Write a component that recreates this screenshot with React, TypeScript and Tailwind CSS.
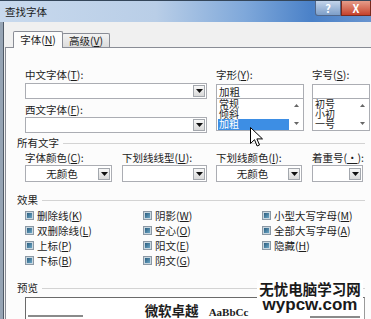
import type { ReactNode } from 'react'

function DownArrow() {
  return (
    <svg width="7" height="4" viewBox="0 0 7 4">
      <path d="M0 0h7L3.5 4z" fill="#111" />
    </svg>
  )
}

function Tri({ up }: { up?: boolean }) {
  return (
    <svg width="5" height="3" viewBox="0 0 5 3">
      <path d={up ? 'M0 3h5L2.5 0z' : 'M0 0h5L2.5 3z'} fill="#666" />
    </svg>
  )
}

function K({ k }: { k: string }) {
  return <span className="underline underline-offset-[1px]">{k}</span>
}

function Label({ children, className = '' }: { children: ReactNode; className?: string }) {
  return <div className={`h-[12px] whitespace-nowrap leading-[12px] ${className}`}>{children}</div>
}

function Combo({ className, text }: { className: string; text?: string }) {
  return (
    <div className={`flex items-center border border-[#abadb3] bg-white ${className}`}>
      <div className="flex-1 text-center leading-[12px]">{text}</div>
      <div className="mr-[1px] flex h-[12px] w-[12px] items-center justify-center border border-[#a3a7ad] bg-gradient-to-b from-[#f8f8f8] to-[#d9d9d9]">
        <DownArrow />
      </div>
    </div>
  )
}

function ListBox({ items, selected, className }: { items: string[]; selected?: number; className: string }) {
  return (
    <div className={`flex border border-[#abadb3] bg-white ${className}`}>
      <div className="flex-1 pl-[1px] text-[10px]">
        {items.map((it, i) => (
          <div
            key={it}
            className={`${i === 2 ? 'h-[11px]' : 'h-[10px]'} pl-[1px] leading-[10px] ${
              i === selected ? 'bg-[#3d8ee4] text-white' : ''
            }`}
          >
            {it}
          </div>
        ))}
      </div>
      <div className="flex w-[14px] flex-col items-center justify-between py-[5px]">
        <Tri up />
        <Tri />
      </div>
    </div>
  )
}

function Heading({ children, className = '' }: { children: ReactNode; className?: string }) {
  return (
    <div className={`-ml-[8px] mr-[6px] flex h-[12px] items-center ${className}`}>
      <span className="leading-[12px]">{children}</span>
      <span className="ml-[4px] h-px flex-1 bg-[#d3d3d3]" />
    </div>
  )
}

function Check({ children }: { children: ReactNode }) {
  return (
    <div className="flex h-[15px] items-center">
      <span className="h-[9px] w-[9px] border border-[#8b98a4] bg-[#c9d7e0] p-px">
        <span className="block h-full w-full bg-gradient-to-br from-[#2b5d7e] to-[#6aa6c6]" />
      </span>
      <span className="ml-[3px] whitespace-nowrap leading-[12px]">{children}</span>
    </div>
  )
}

export default function App() {
  return (
    <div className="relative h-[319px] w-[371px] overflow-hidden bg-[#f0f0f0] font-['Noto_Sans_CJK_SC','Noto_Sans',sans-serif] text-[10.5px] text-[#1d1d1d]">
      {/* 标题栏 */}
      <div className="flex h-[22px] border-t border-[#34465a] bg-[linear-gradient(90deg,#c8d9ed_0%,#b9cee7_42%,#7fa8da_66%,#4a81c8_84%,#6894cf_100%)]">
        <div className="pl-[5px] pt-[4px] leading-[14px] text-[#1a1a1a]">查找字体</div>
        <div className="ml-auto flex">
          <div className="flex h-[15px] w-[26px] items-center justify-center rounded-bl-[3px] border border-t-0 border-[#51678a] bg-gradient-to-b from-[#c3d4ea] to-[#7d9ec8] text-[11px] font-bold leading-[12px] text-white">
            ?
          </div>
          <div className="flex h-[15px] w-[30px] items-center justify-center border border-t-0 border-[#7a2a1e] bg-gradient-to-b from-[#e59c8a] to-[#c5402a] text-[11px] font-bold leading-[12px] text-white">
            X
          </div>
        </div>
      </div>

      <div className="flex h-[297px]">
        <div className="w-[4px] border-r border-[#4f5966] bg-[#96a4b4]" />
        <div className="flex-1 pt-[9px]">
          {/* 选项卡 */}
          <div className="relative z-10 flex h-[16px] items-end pl-[9px]">
            <div className="-mb-px flex h-[17px] w-[50px] items-center justify-center rounded-t-[2px] border border-b-0 border-[#898c95] bg-[#fcfcfc] leading-[12px]">
              字体(<K k="N" />)
            </div>
            <div className="-ml-px flex h-[14px] w-[48px] items-center justify-center rounded-t-[2px] border border-b-0 border-[#898c95] bg-gradient-to-b from-[#f3f3f3] to-[#dcdcdc] leading-[12px]">
              高级(<K k="V" />)
            </div>
          </div>

          <div className="ml-[1px] h-[300px] border-l border-t border-[#898c95] bg-[#fcfcfc] pl-[19px]">
            <div className="flex pt-[21px]">
              <div className="w-[182px]">
                <Label>
                  中文字体(<K k="T" />):
                </Label>
                <Combo className="mt-[2px] h-[16px] w-[182px]" />
                <Label className="mt-[5px]">
                  西文字体(<K k="F" />):
                </Label>
                <Combo className="mt-[1px] h-[16px] w-[182px]" />
              </div>
              <div className="ml-[9px] w-[88px]">
                <Label>
                  字形(<K k="Y" />):
                </Label>
                <div className="mt-[3px] h-[15px] border border-[#abadb3] bg-white pl-[2px] leading-[13px]">加粗</div>
                <ListBox className="-mt-px h-[33px]" items={['常规', '倾斜', '加粗']} selected={2} />
              </div>
              <div className="ml-[8px] w-[58px]">
                <Label>
                  字号(<K k="S" />):
                </Label>
                <div className="mt-[3px] h-[15px] border border-[#abadb3] bg-white" />
                <ListBox className="-mt-px h-[33px]" items={['初号', '小初', '一号']} />
              </div>
            </div>

            <Heading className="mt-[4px]">所有文字</Heading>
            <div className="mt-[3px] flex">
              <Label className="w-[97px]">
                字体颜色(<K k="C" />):
              </Label>
              <Label className="w-[94px]">
                下划线线型(<K k="U" />):
              </Label>
              <Label className="w-[96px]">
                下划线颜色(<K k="I" />):
              </Label>
              <Label>
                着重号(<K k="·" />):
              </Label>
            </div>
            <div className="mt-[1px] flex">
              <Combo className="h-[17px] w-[87px]" text="无颜色" />
              <Combo className="ml-[10px] h-[17px] w-[85px]" />
              <Combo className="ml-[9px] h-[17px] w-[86px]" text="无颜色" />
              <Combo className="ml-[10px] h-[17px] w-[51px]" />
            </div>

            <Heading className="mt-[12px]">效果</Heading>
            <div className="mt-[2px] grid grid-cols-[118px_119px_1fr]">
              <div>
                <Check>
                  删除线(<K k="K" />)
                </Check>
                <Check>
                  双删除线(<K k="L" />)
                </Check>
                <Check>
                  上标(<K k="P" />)
                </Check>
                <Check>
                  下标(<K k="B" />)
                </Check>
              </div>
              <div>
                <Check>
                  阴影(<K k="W" />)
                </Check>
                <Check>
                  空心(<K k="O" />)
                </Check>
                <Check>
                  阳文(<K k="E" />)
                </Check>
                <Check>
                  阴文(<K k="G" />)
                </Check>
              </div>
              <div>
                <Check>
                  小型大写字母(<K k="M" />)
                </Check>
                <Check>
                  全部大写字母(<K k="A" />)
                </Check>
                <Check>
                  隐藏(<K k="H" />)
                </Check>
              </div>
            </div>

            <Heading className="mt-[14px]">预览</Heading>
            <div className="mr-[6px] mt-[3px] h-[40px] border border-b-[#c8c8c8] border-l-[#6a6a6a] border-r-[#9a9a9a] border-t-[#6a6a6a] bg-white">
              <div className="mt-[5px] flex h-[14px]">
                <div className="ml-[2px] mt-[12px] h-[2px] w-[55px] bg-[#8a8a8a]" />
                <div className="flex flex-1 items-baseline justify-center">
                  <span className="text-[13.5px] font-bold leading-[14px]">微软卓越</span>
                  <span className="ml-[10px] font-['Liberation_Serif',serif] text-[11px] font-bold leading-[14px]">AaBbCc</span>
                </div>
                <div className="mr-[4px] mt-[13px] h-[2px] w-[50px] bg-[#8a8a8a]" />
              </div>
            </div>
          </div>
        </div>
      </div>

      {/* 鼠标指针 */}
      <svg className="absolute left-[250px] top-[127px]" width="13" height="21" viewBox="0 0 13 21">
        <path d="M0.5 0.5v16l4-3.8 2.6 6.3 2.4-1-2.6-6.1h5.6z" fill="#fff" stroke="#000" strokeWidth="1" />
      </svg>

      {/* 水印 */}
      <div className="absolute left-[257px] top-[280px] flex h-[32px] w-[106px] flex-col items-center bg-white">
        <div className="text-[14.5px] font-bold leading-[17px] text-[#1a1a1a]">无忧电脑学习网</div>
        <div className="font-['Liberation_Sans',sans-serif] text-[17px] font-bold leading-[15px] text-[#1a1a1a]">wypcw.com</div>
      </div>
    </div>
  )
}
